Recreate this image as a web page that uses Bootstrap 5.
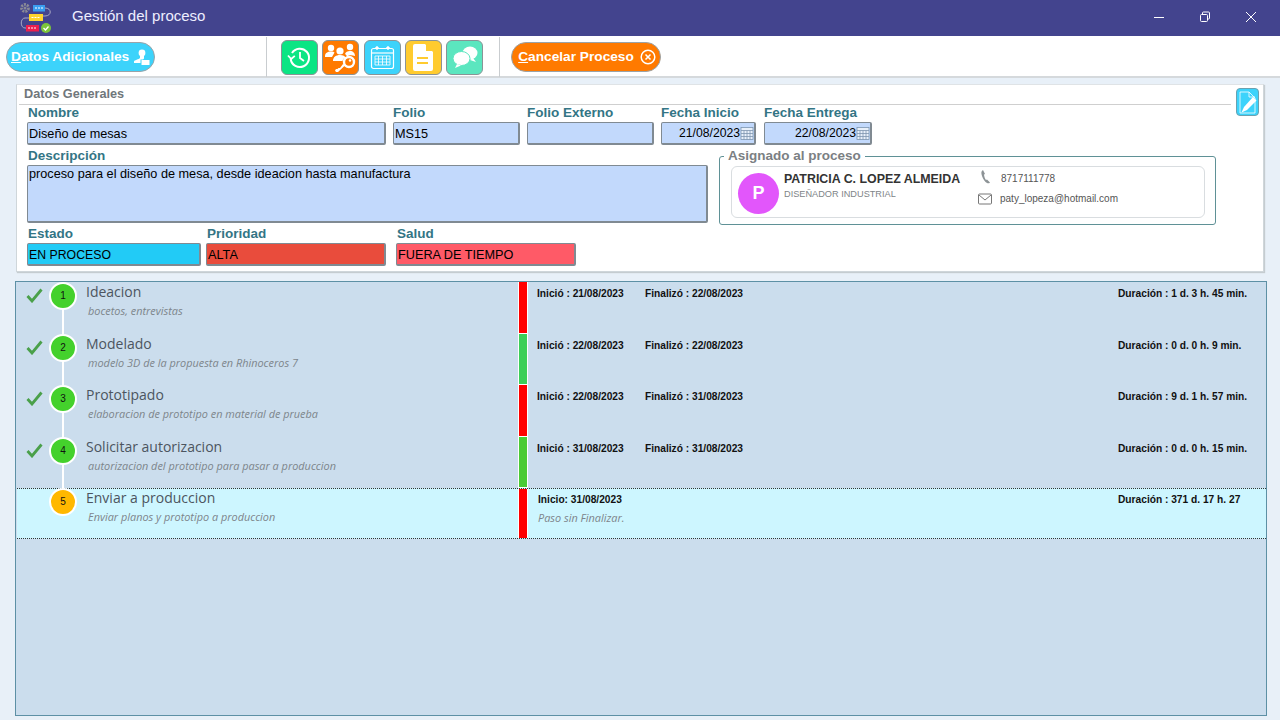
<!DOCTYPE html>
<html lang="es">
<head>
<meta charset="utf-8">
<title>Gestión del proceso</title>
<link rel="stylesheet" href="https://cdn.jsdelivr.net/npm/bootstrap@5.3.0/dist/css/bootstrap.min.css">
<style>
html,body{height:720px;overflow:hidden}
body{background:#e8f0f8;font-family:"Liberation Sans",Arial,sans-serif;color:#000}
.barra-titulo{height:36px;background:#43448e;color:#eef}
.barra-titulo .nombre-app{font-size:15px;margin-left:19px;margin-top:-3px}
.logo-app{margin-left:19px;display:block}
.ctl-grupo{margin-right:6px;margin-top:-2px}
.ctl-ventana{width:46px;height:32px}
.barra-acciones{height:42px;background:#fff;border-bottom:2px solid #d5d9dc;padding:2px 0 0 6px}
.sep-v{width:1px;height:40px;background:#c9cdd0}
.btn-pastilla{height:30px;border-radius:15px;border:1.5px solid #9aa3a8;color:#fff;font-weight:700;font-size:13.7px;padding:0 4px;line-height:1;white-space:nowrap}
.btn-pastilla:hover{color:#fff}
.btn-datos{width:149px;background:#3cd3fb;margin-right:111px}
.btn-cancel{width:150px;background:#ff7a00;margin-left:11px;padding-left:6px}
.btn-cuad{width:37px;height:35px;padding:0;border-radius:6px;border:1.5px solid #8a9396}
.c-verde{background:#0be584}.c-naranja{background:#ff7a00}.c-azul{background:#3cd3fb}.c-amar{background:#ffcb2f}.c-menta{background:#5be6bf}
.grupo-iconos{gap:4.3px;padding:0 16px 0 14px}
.panel-gen{margin:6px 16px 0 16px;width:1248px;height:188px;background:#fff;border:1px solid #cfd6da;border-top-color:#dfe3e6;box-shadow:1px 1px 1px #c5ccd0;padding:0 2px}
.tit-gen{font-size:12.7px;font-weight:700;color:#70777b;height:20px;line-height:18px;padding-left:5px;border-bottom:1px solid #cfcfcf;width:1212px}
.btn-editar{position:absolute;left:1219px;top:3px;width:23px;height:28px;border-radius:4px;background:#3cd3fb;border:1.5px solid #6aa1b0;padding:0}
.cuerpo-gen{padding-left:8px;margin-top:-2px}
.etq{font-size:13.5px;font-weight:700;color:#337585;height:19px;line-height:19px;padding-left:1px}
.etq-0{padding-left:0}
.campo.form-control{height:23px;min-height:0;background:#c2d9fc;border:1px solid #808a92;border-bottom-width:2px;border-right-width:2px;border-radius:2px;padding:0 1px;font-size:12.7px;line-height:22px;color:#000;white-space:nowrap;overflow:hidden}
.campo-area.form-control{height:58px;line-height:17px;padding-top:0}
.campo.campo-fecha{font-size:12.2px;padding-right:0}
.w-359{width:359px}.w-127{width:127px}.w-95{width:95px}.w-108{width:108px}.w-681{width:681px}.w-174{width:174px}.w-180{width:180px}
.fila-g{gap:7px;margin-bottom:1px}
.col-entrega{margin-left:1px}
.fila-b{gap:5px;margin-top:-1px}
.col-salud{margin-left:5px}
.caja-asig{position:relative;width:497px;height:69px;margin:10px 0 0 11px;border:1.5px solid #5f9196;border-radius:3px;padding:9px 10px 0 11px}
.leg-asig{position:absolute;left:4px;top:-9px;background:#fff;padding:0 4px;font-size:13.5px;font-weight:700;color:#7b8083;line-height:15px}
.tarjeta-p{height:52px;width:474px;border:1px solid #d9dde0;border-radius:6px;padding:0 0 0 6px}
.avatar{width:41px;height:41px;border-radius:50%;background:#e256fb;color:#fff;font-size:18px;font-weight:700;margin-top:6px;flex:none}
.nom-p{font-size:12.4px;font-weight:700;color:#333;margin:5px 0 0 5px;line-height:14px;width:187px}
.cargo-p{font-size:9.2px;font-weight:400;color:#808488;margin-top:3px;line-height:11px}
.cont-p{font-size:10px;color:#555;line-height:20px;margin-top:2px;margin-left:7px}
.cont-p svg{display:inline-block;margin-right:9px;vertical-align:-3px}
.cont-p svg.ico-mail{margin-right:8px}
.panel-pasos{width:1252px;height:435px;margin:9px 0 0 15px;background:#cbdded;border:1px solid #5d90a5;position:relative}
.paso{height:51.5px;position:relative}
.paso-act{height:51px;background:#cdf6ff;border-top:1px dotted #333;border-bottom:1px dotted #333;margin-left:1px}
.col-chk{width:33px;padding:1px 0 0 10px;flex:none}
.col-chk-v{width:32px}
.col-num{width:36px;flex:none;position:relative}
.circ{width:28px;height:28px;border-radius:50%;border:2px solid #fff;font-size:10px;line-height:24px;text-align:center;color:#111;position:relative;z-index:1}
.paso-act .circ{margin-top:-1px}
.circ-v{background:#44d12c}.circ-a{background:#ffb800}
.linea{position:absolute;left:13px;top:27px;width:2px;height:26px;background:#fff}
.col-txt{width:433px;flex:none;padding-left:1px}
.t-paso{font-family:"Open Sans","Noto Sans",sans-serif;font-size:14px;color:#4c5560;line-height:20px}
.paso-act .t-paso{margin-top:-1px}
.s-paso{font-family:"Open Sans","Noto Sans",sans-serif;font-size:10.9px;font-style:italic;color:#7d858b;line-height:14px;margin-top:2px;padding-left:2px}
.barra-est{width:10px;flex:none;border-left:1px solid #fff;border-right:1px solid #fff;border-bottom:1px solid #fff}
.paso-act .barra-est{border-bottom:0}
.b-rojo{background:#ff0000}.b-verde{background:#3ccf58}.b-verde2{background:#4acb34}
.col-fechas{font-size:10.2px;font-weight:700;color:#111;padding:5px 0 0 9px;line-height:13px;flex:1}
.paso-act .col-fechas{padding:4px 0 0 10px}
.f-ini{width:108px;flex:none}
.f-fin{width:473px;flex:none}
.f-act{width:580px;flex:none}
.f-pendiente{font-family:"Open Sans","Noto Sans",sans-serif;font-size:10.9px;font-style:italic;font-weight:400;color:#7d858b;margin-top:5px}
.u-l{text-decoration:underline}
.c-estado.form-control{background:#22cbf6;font-size:12.3px}
.c-prio.form-control{background:#e94c3c}
.c-salud.form-control{background:#ff5a67}
</style>
</head>
<body>
<header class="barra-titulo d-flex align-items-center">
  <svg class="logo-app" width="34" height="34" viewBox="0 0 34 34" fill="none">
    <path d="M26 7c7 0 7 8 0 8h-2M10 17H6c-5 0-5 10 0 10h1" stroke="#a9a9c4" stroke-width="1"/>
    <circle cx="6" cy="7" r="3.500" fill="none" stroke="#8a8a96" stroke-width="2.800" stroke-dasharray="2 1"/>
    <circle cx="6" cy="7" r="1.500" fill="#8a8a96"/>
    <rect x="14" y="4" width="12" height="6.500" fill="#3a9df0"/>
    <rect x="10" y="13" width="14" height="7" fill="#ffd52e"/>
    <rect x="7" y="24" width="13" height="6.500" fill="#ec1f4e"/>
    <circle cx="27" cy="27" r="5" fill="#7cc63a"/>
    <path d="M24.500 27l2 2 3-3.500" stroke="#fff" stroke-width="1.300"/>
    <path d="M16 7h8M12.500 16.500h8M9 27h8" stroke="#fff" stroke-width="1" stroke-dasharray="2 1"/>
  </svg>
  <div class="nombre-app flex-grow-1">Gestión del proceso</div>
  <div class="d-flex ctl-grupo">
    <div class="ctl-ventana d-flex align-items-center justify-content-center"><svg width="12" height="12" viewBox="0 0 12 12"><path d="M1 6.500h10" stroke="#fff"/></svg></div>
    <div class="ctl-ventana d-flex align-items-center justify-content-center"><svg width="12" height="12" viewBox="0 0 12 12" fill="none" stroke="#fff"><rect x="1.500" y="3.500" width="7" height="7" rx="1"/><path d="M3.500 3V2a1 1 0 0 1 1-1h5a1 1 0 0 1 1 1v5a1 1 0 0 1-1 1H9"/></svg></div>
    <div class="ctl-ventana d-flex align-items-center justify-content-center"><svg width="12" height="12" viewBox="0 0 12 12"><path d="M1 1l10 10M11 1L1 11" stroke="#fff"/></svg></div>
  </div>
</header>

<nav class="barra-acciones d-flex align-items-center">
  <button class="btn btn-pastilla btn-datos d-flex align-items-center justify-content-between"><span><span class="u-l">D</span>atos Adicionales</span>
    <svg width="17" height="17" viewBox="0 0 17 17" fill="#fff"><circle cx="9" cy="4" r="3.400"/><path d="M7 7h4v2.500l-1 1H7.500V14H1v-1.500C1 11 6 10.500 7 9z"/><rect x="8.500" y="11" width="8" height="5"/></svg></button>
  <div class="sep-v"></div>
  <div class="d-flex grupo-iconos">
    <button class="btn btn-cuad c-verde d-flex align-items-center justify-content-center" aria-label="Historial"><svg width="25" height="25" viewBox="0 0 25 25" fill="none" stroke="#fff" stroke-width="2"><path d="M5 8a9.200 9.200 0 1 1-1.300 6"/><path d="M1 10.500l3.200 3.500 3.600-3.200" stroke-width="1.800"/><path d="M13 7v6l4 3" stroke-width="1.800"/></svg></button>
    <button class="btn btn-cuad c-naranja d-flex align-items-center justify-content-center" aria-label="Usuarios"><svg width="33" height="31" viewBox="0 0 33 31" fill="#fff"><circle cx="7" cy="6" r="3.200"/><path d="M1 14c0-3 2.500-4.500 6-4.500 2 0 3 .5 3.500 1L8 15H1z"/><circle cx="16" cy="9" r="3.600"/><path d="M9 19c0-4 3-6 7-6 3 0 5 1 6 3-2 0-3 1-3.500 3z"/><circle cx="26" cy="5" r="3.200"/><path d="M21 12c.5-2 2.500-3 5-3 3 0 5 2 5 5-3-1-6-1-8 .5-.5-1-1-2-2-2.500z"/><circle cx="25" cy="20" r="5" fill="none" stroke="#fff" stroke-width="2.400"/><circle cx="26" cy="18.500" r="1.200"/><path d="M21.500 23l-7.500 7h-2l-1-1.500 1-1.500h1.500l1-1h1.500l3-4z"/></svg></button>
    <button class="btn btn-cuad c-azul d-flex align-items-center justify-content-center" aria-label="Calendario"><svg width="27" height="27" viewBox="0 0 27 27" fill="none" stroke="#fff"><rect x="2.500" y="4.500" width="22" height="20" rx="2" stroke-width="1.200"/><path d="M2.500 9h22" stroke-width="1.200"/><circle cx="8" cy="4" r="1.300" fill="#fff"/><circle cx="19" cy="4" r="1.300" fill="#fff"/><path d="M6 12h15v9H6zM9.500 12v9M13.500 12v9M17.500 12v9M6 15h15M6 18h15" stroke-width=".8"/></svg></button>
    <button class="btn btn-cuad c-amar d-flex align-items-center justify-content-center" aria-label="Documento"><svg width="20" height="27" viewBox="0 0 20 27"><path fill="#fff" d="M2 0h10l8 8v17a2 2 0 0 1-2 2H2a2 2 0 0 1-2-2V2a2 2 0 0 1 2-2z"/><path d="M13 0v7h7" fill="#ffcb2f"/><path d="M4 14h11M4 19h11" stroke="#ffcb2f" stroke-width="2"/></svg></button>
    <button class="btn btn-cuad c-menta d-flex align-items-center justify-content-center" aria-label="Comentarios"><svg width="26" height="24" viewBox="0 0 26 24" fill="#fff"><ellipse cx="18" cy="8" rx="7.500" ry="6.500"/><path d="M21 13l3 4-6-2z"/><ellipse cx="9.500" cy="13.500" rx="8.500" ry="7" stroke="#5be6bf" stroke-width="1"/><path d="M5 19l-2 4 6-2.500z"/></svg></button>
  </div>
  <div class="sep-v"></div>
  <button class="btn btn-pastilla btn-cancel d-flex align-items-center justify-content-between"><span><span class="u-l">C</span>ancelar Proceso</span>
    <svg width="16" height="16" viewBox="0 0 16 16" fill="none" stroke="#fff" stroke-width="1.500"><circle cx="8" cy="8" r="6.800"/><path d="M5.500 5.500l5 5M10.500 5.500l-5 5"/></svg></button>
</nav>

<section class="panel-gen position-relative">
  <div class="tit-gen">Datos Generales</div>
  <button class="btn btn-editar d-flex align-items-center justify-content-center" aria-label="Editar"><svg width="18" height="23" viewBox="0 0 18 23"><path d="M1 1h9l6 6v15H1z" fill="none" stroke="#fff" stroke-width=".8"/><path d="M10 1v5h6" fill="none" stroke="#fff" stroke-width=".8"/><path d="M14 6l3.500 3.500L8 19l-5.500 2.500L5 16z" fill="#fff"/></svg></button>
  <div class="cuerpo-gen">
    <div class="d-flex fila-g">
      <div class="w-359"><div class="etq">Nombre</div><div class="campo form-control">Diseño de mesas</div></div>
      <div class="w-127"><div class="etq etq-0">Folio</div><div class="campo form-control">MS15</div></div>
      <div class="w-127"><div class="etq etq-0">Folio Externo</div><div class="campo form-control"></div></div>
      <div class="w-95"><div class="etq etq-0">Fecha Inicio</div><div class="campo campo-fecha form-control d-flex justify-content-end align-items-center">21/08/2023<svg width="14" height="15" viewBox="0 0 14 15" fill="#e8f0fa" stroke="#7d96b0" stroke-width=".8"><rect x="1" y="1.500" width="12" height="12"/><path d="M1 4.500h12M1 7.500h12M1 10.500h12M4 4.500v9M7 4.500v9M10 4.500v9"/></svg></div></div>
      <div class="w-108 col-entrega"><div class="etq etq-0">Fecha Entrega</div><div class="campo campo-fecha form-control d-flex justify-content-end align-items-center">22/08/2023<svg width="14" height="15" viewBox="0 0 14 15" fill="#e8f0fa" stroke="#7d96b0" stroke-width=".8"><rect x="1" y="1.500" width="12" height="12"/><path d="M1 4.500h12M1 7.500h12M1 10.500h12M4 4.500v9M7 4.500v9M10 4.500v9"/></svg></div></div>
    </div>
    <div class="d-flex">
      <div class="w-681"><div class="etq">Descripción</div><div class="campo campo-area form-control">proceso para el diseño de mesa, desde ideacion hasta manufactura</div></div>
      <div class="caja-asig">
        <div class="leg-asig">Asignado al proceso</div>
        <div class="tarjeta-p d-flex">
          <div class="avatar d-flex align-items-center justify-content-center">P</div>
          <div class="nom-p">PATRICIA C. LOPEZ ALMEIDA<div class="cargo-p">DISEÑADOR INDUSTRIAL</div></div>
          <div class="cont-p">
            <div><svg width="14" height="16" viewBox="-2 0 14 16" fill="#8d9396"><path d="M3 1c-2 1-2 3-1 6s3 6 5 7c1 .5 2 .5 3-.5l-3-3-1 .5C5 10 4 7 4 5.500l1-.5z"/></svg>8717111778</div>
            <div><svg class="ico-mail" width="14" height="12" viewBox="0 0 14 12" fill="none" stroke="#777"><rect x=".5" y="1" width="13" height="10" rx="1"/><path d="M1 2l6 5 6-5"/></svg>paty_lopeza@hotmail.com</div>
          </div>
        </div>
      </div>
    </div>
    <div class="d-flex fila-b">
      <div class="w-174"><div class="etq">Estado</div><div class="campo c-estado form-control">EN PROCESO</div></div>
      <div class="w-180"><div class="etq">Prioridad</div><div class="campo c-prio form-control">ALTA</div></div>
      <div class="w-180 col-salud"><div class="etq">Salud</div><div class="campo c-salud form-control">FUERA DE TIEMPO</div></div>
    </div>
  </div>
</section>

<main class="panel-pasos">
  <div class="paso d-flex">
    <div class="col-chk"><svg width="17" height="15" viewBox="0 0 17 15" fill="none" stroke="#4aa04a" stroke-width="2.800"><path d="M1.500 8l4.500 5L15.500 1.500"/></svg></div>
    <div class="col-num"><div class="circ circ-v">1</div><div class="linea"></div></div>
    <div class="col-txt"><div class="t-paso">Ideacion</div><div class="s-paso">bocetos, entrevistas</div></div>
    <div class="barra-est b-rojo"></div>
    <div class="col-fechas d-flex"><div class="f-ini">Inició : 21/08/2023</div><div class="f-fin">Finalizó : 22/08/2023</div><div>Duración : 1 d. 3 h. 45 min.</div></div>
  </div>
  <div class="paso d-flex">
    <div class="col-chk"><svg width="17" height="15" viewBox="0 0 17 15" fill="none" stroke="#4aa04a" stroke-width="2.800"><path d="M1.500 8l4.500 5L15.500 1.500"/></svg></div>
    <div class="col-num"><div class="circ circ-v">2</div><div class="linea"></div></div>
    <div class="col-txt"><div class="t-paso">Modelado</div><div class="s-paso">modelo 3D de la propuesta en Rhinoceros 7</div></div>
    <div class="barra-est b-verde"></div>
    <div class="col-fechas d-flex"><div class="f-ini">Inició : 22/08/2023</div><div class="f-fin">Finalizó : 22/08/2023</div><div>Duración : 0 d. 0 h. 9 min.</div></div>
  </div>
  <div class="paso d-flex">
    <div class="col-chk"><svg width="17" height="15" viewBox="0 0 17 15" fill="none" stroke="#4aa04a" stroke-width="2.800"><path d="M1.500 8l4.500 5L15.500 1.500"/></svg></div>
    <div class="col-num"><div class="circ circ-v">3</div><div class="linea"></div></div>
    <div class="col-txt"><div class="t-paso">Prototipado</div><div class="s-paso">elaboracion de prototipo en material de prueba</div></div>
    <div class="barra-est b-rojo"></div>
    <div class="col-fechas d-flex"><div class="f-ini">Inició : 22/08/2023</div><div class="f-fin">Finalizó : 31/08/2023</div><div>Duración : 9 d. 1 h. 57 min.</div></div>
  </div>
  <div class="paso d-flex">
    <div class="col-chk"><svg width="17" height="15" viewBox="0 0 17 15" fill="none" stroke="#4aa04a" stroke-width="2.800"><path d="M1.500 8l4.500 5L15.500 1.500"/></svg></div>
    <div class="col-num"><div class="circ circ-v">4</div><div class="linea"></div></div>
    <div class="col-txt"><div class="t-paso">Solicitar autorizacion</div><div class="s-paso">autorizacion del prototipo para pasar a produccion</div></div>
    <div class="barra-est b-verde2"></div>
    <div class="col-fechas d-flex"><div class="f-ini">Inició : 31/08/2023</div><div class="f-fin">Finalizó : 31/08/2023</div><div>Duración : 0 d. 0 h. 15 min.</div></div>
  </div>
  <div class="paso paso-act d-flex">
    <div class="col-chk col-chk-v"></div>
    <div class="col-num"><div class="circ circ-a">5</div></div>
    <div class="col-txt"><div class="t-paso">Enviar a produccion</div><div class="s-paso">Enviar planos y prototipo a produccion</div></div>
    <div class="barra-est b-rojo"></div>
    <div class="col-fechas d-flex"><div class="f-act">Inicio: 31/08/2023<div class="f-pendiente">Paso sin Finalizar.</div></div><div>Duración : 371 d. 17 h. 27</div></div>
  </div>
</main>
<script src="https://cdn.jsdelivr.net/npm/bootstrap@5.3.0/dist/js/bootstrap.bundle.min.js"></script>
</body>
</html>
